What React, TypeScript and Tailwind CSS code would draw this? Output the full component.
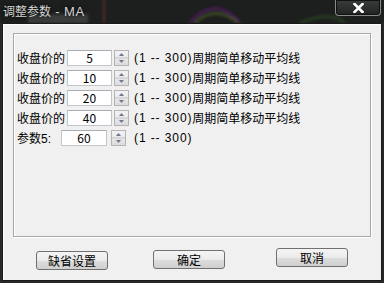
import React from "react";

const rows = [
  { label: "收盘价的", value: "5" },
  { label: "收盘价的", value: "10" },
  { label: "收盘价的", value: "20" },
  { label: "收盘价的", value: "40" },
];

const Spinner = () => (
  <svg width="15" height="16" viewBox="0 0 15 16" className="shrink-0">
    <defs>
      <linearGradient id="sp" x1="0" y1="0" x2="0" y2="1">
        <stop offset="0" stopColor="#f4f4f4" />
        <stop offset="1" stopColor="#dcdcdc" />
      </linearGradient>
    </defs>
    <rect x="0.5" y="0.5" width="14" height="15" fill="url(#sp)" stroke="#b4b4b4" />
    <line x1="1" y1="8" x2="14" y2="8" stroke="#c4c4c4" />
    <path d="M5 6 L7.5 3 L10 6 Z" fill="#6a7a90" />
    <path d="M5 10 L7.5 13 L10 10 Z" fill="#6a7a90" />
  </svg>
);

const NumBox = ({ value, w }: { value: string; w: string }) => (
  <div
    className={`${w} h-[16px] shrink-0 bg-white border border-[#c2c6cc] border-t-[#a9adb3] flex items-center justify-center text-[12px] leading-none`}
  >
    {value}
  </div>
);

const Btn = ({ children, cls }: { children: React.ReactNode; cls: string }) => (
  <div
    className={`${cls} w-[72px] h-[19px] rounded-[3px] border border-[#707070] bg-[linear-gradient(#f4f4f4_0%,#ebebeb_50%,#dddddd_51%,#cfcfcf_100%)] flex items-center justify-center text-[12px] leading-none text-black`}
  >
    {children}
  </div>
);

export default function App() {
  return (
    <div className="w-[384px] h-[283px] bg-[#262927] flex flex-col font-['Noto_Sans_CJK_SC',sans-serif] overflow-hidden">
      {/* title bar */}
      <div className="relative h-[23px] shrink-0 bg-[#1c1f1e] flex items-start">
        <svg width="384" height="23" className="absolute left-0 top-0">
          <defs>
            <filter id="bl">
              <feGaussianBlur stdDeviation="1.6" />
            </filter>
          </defs>
          <g filter="url(#bl)" fill="none" strokeWidth="2">
            <rect x="28" y="14" width="60" height="9" fill="#3a3d3c" stroke="none" />
            <line x1="104" y1="0" x2="104" y2="23" stroke="#5a2a2a" />
            <path d="M190 23 Q215 -6 240 23" stroke="#4a1a55" strokeWidth="3" />
            <path d="M195 23 Q215 4 238 23" stroke="#4a5a20" />
            <path d="M300 23 Q330 10 345 23" stroke="#2e4a22" />
          </g>
        </svg>
        <span className="relative ml-[3px] mt-[3px] text-[12px] leading-[16px] text-[#d4d4d4] [text-shadow:0_0_4px_#000]">
          调整参数<span className="font-['Liberation_Sans',sans-serif] text-[13px] tracking-[0.5px]"> - MA</span>
        </span>
        <div className="relative ml-auto mr-[3px] w-[46px] h-[16px] rounded-b-[4px] border border-t-0 border-[#8a8c8b] bg-[linear-gradient(#3a3c3b,#222423)] shadow-[inset_0_0_0_1px_#111] flex items-center justify-center">
          <svg width="11" height="10" viewBox="0 0 11 10">
            <path d="M1.5 1 L9.5 9 M9.5 1 L1.5 9" stroke="#ffffff" strokeWidth="2.6" strokeLinecap="square" />
          </svg>
        </div>
      </div>

      {/* client */}
      <div className="mx-[2px] mb-[2px] flex-1 border border-[#1a1a1a] shadow-[inset_1px_1px_0_#fdfdfd] bg-[#f0f0f0] flex flex-col text-black">
        <div className="ml-[10px] mt-[9px] w-[358px] h-[204px] border border-[#a8a8a8] shadow-[inset_1px_1px_0_#fff,1px_1px_0_#fff] pt-[16px] pl-[3px] flex flex-col gap-[4px]">
          {rows.map((r, i) => (
            <div key={i} className="flex items-center h-[16px] text-[12px] leading-none">
              <span className="w-[50px] shrink-0">{r.label}</span>
              <NumBox value={r.value} w="w-[45px]" />
              <span className="w-[2px]" />
              <Spinner />
              <span className="ml-[5px] font-['Liberation_Sans',sans-serif] tracking-[0.9px] whitespace-pre">
                (1 -- 300)
              </span>
              <span>周期简单移动平均线</span>
            </div>
          ))}
          <div className="flex items-center h-[16px] text-[12px] leading-none">
            <span className="w-[44px] shrink-0">
              参数<span className="font-['Liberation_Sans',sans-serif]">5:</span>
            </span>
            <NumBox value="60" w="w-[46px]" />
            <span className="w-[4px]" />
            <Spinner />
            <span className="ml-[8px] font-['Liberation_Sans',sans-serif] tracking-[0.9px] whitespace-pre">
              (1 -- 300)
            </span>
          </div>
        </div>

        <div className="flex items-start mt-[11px]">
          <Btn cls="ml-[33px] mt-[3px]">缺省设置</Btn>
          <Btn cls="ml-[45px] mt-[2px]">确定</Btn>
          <Btn cls="ml-[51px]">取消</Btn>
        </div>
      </div>
    </div>
  );
}
